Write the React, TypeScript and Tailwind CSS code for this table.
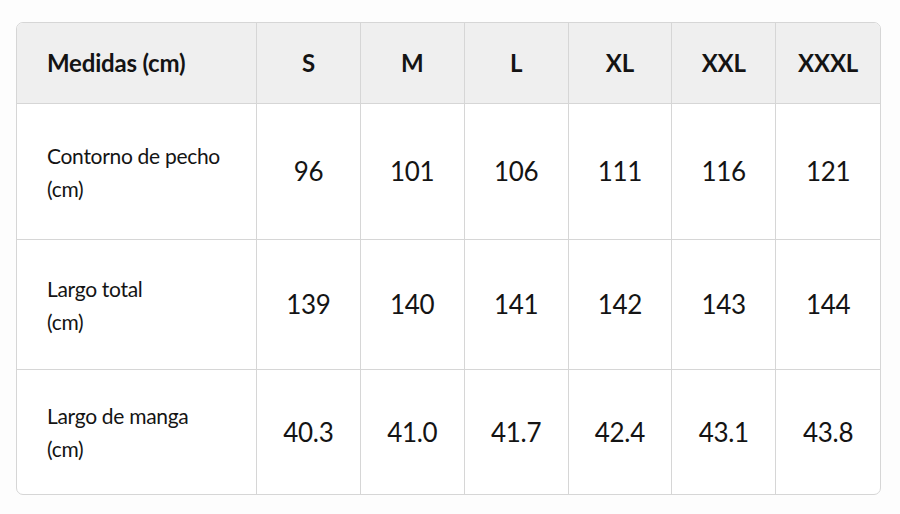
const sizes = ["S", "M", "L", "XL", "XXL", "XXXL"];

const rows = [
  { label: ["Contorno de pecho", "(cm)"], values: ["96", "101", "106", "111", "116", "121"], h: "h-[136px]" },
  { label: ["Largo total", "(cm)"], values: ["139", "140", "141", "142", "143", "144"], h: "h-[130px]" },
  { label: ["Largo de manga", "(cm)"], values: ["40.3", "41.0", "41.7", "42.4", "43.1", "43.8"], h: "h-[124px]" },
];

export default function App() {
  return (
    <div className="w-[900px] h-[514px] bg-[#fdfdfd] pt-[22px] pl-[16px] font-['Lato',sans-serif] text-[#141414]">
      <div className="w-[865px] border border-[#d6d6d6] rounded-[7px] overflow-hidden bg-white">
        {/* header */}
        <div className="grid grid-cols-[240px_repeat(6,1fr)] h-[81px] bg-[#efefef] border-b border-[#d6d6d6] font-bold text-[24px] tracking-[-0.2px]">
          <div className="flex items-center pl-[30px] border-r border-[#d6d6d6]">Medidas (cm)</div>
          {sizes.map((s, i) => (
            <div
              key={s}
              className={`flex items-center justify-center ${i < sizes.length - 1 ? "border-r border-[#d6d6d6]" : ""}`}
            >
              {s}
            </div>
          ))}
        </div>

        {rows.map((row, r) => (
          <div
            key={r}
            className={`grid grid-cols-[240px_repeat(6,1fr)] ${row.h} ${r < rows.length - 1 ? "border-b border-[#d6d6d6]" : ""}`}
          >
            <div className="flex flex-col justify-center pl-[30px] border-r border-[#d6d6d6] text-[21px] tracking-[-0.3px] leading-[33px]">
              <span>{row.label[0]}</span>
              <span>{row.label[1]}</span>
            </div>
            {row.values.map((v, i) => (
              <div
                key={i}
                className={`flex items-center justify-center text-[26px] tracking-[-0.3px] ${i < row.values.length - 1 ? "border-r border-[#d6d6d6]" : ""}`}
              >
                {v}
              </div>
            ))}
          </div>
        ))}
      </div>
    </div>
  );
}
